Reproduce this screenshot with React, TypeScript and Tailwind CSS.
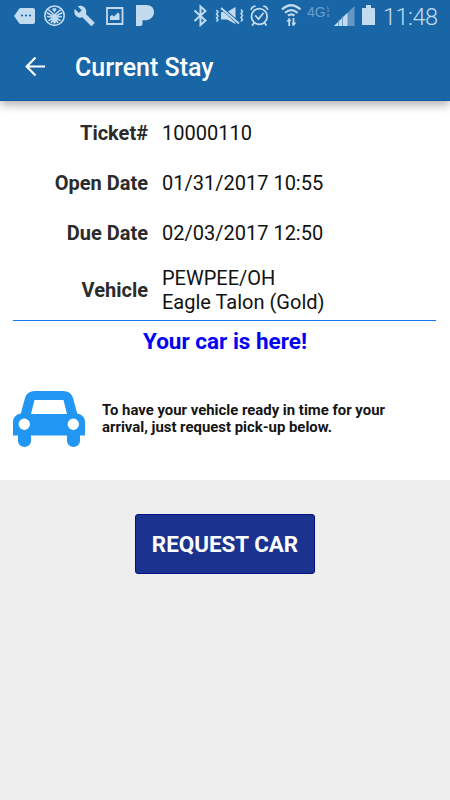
import { type ReactNode } from "react";

const details = [
  { label: "Ticket#", value: ["10000110"] },
  { label: "Open Date", value: ["01/31/2017 10:55"] },
  { label: "Due Date", value: ["02/03/2017 12:50"] },
];

// every status icon is drawn in a box as tall as the bar
function StatusIcon({
  width,
  className,
  children,
}: {
  width: number;
  className?: string;
  children: ReactNode;
}) {
  return (
    <svg
      width={width}
      height={33}
      viewBox={`0 0 ${width} 33`}
      fill="currentColor"
      className={`shrink-0 ${className ?? ""}`}
    >
      {children}
    </svg>
  );
}

function StatusBar() {
  return (
    <div className="flex h-[33px] items-center text-[#c3dbee]">
      <StatusIcon width={21} className="ml-[14px]">
        <path d="M6.5 8H19a2 2 0 0 1 2 2v12a2 2 0 0 1-2 2H6.500Q5.500 24 5 23L0 16l5-7q.5-1 1.500-1Z" />
        <g fill="#1966a7">
          <circle cx="8" cy="15.500" r="1.100" />
          <circle cx="12" cy="15.500" r="1.100" />
          <circle cx="16" cy="15.500" r="1.100" />
        </g>
      </StatusIcon>
      <StatusIcon width={22} className="ml-[9px]">
        <circle cx="10.500" cy="15.700" r="9.700" fill="none" stroke="currentColor" strokeWidth="1.600" />
        <path d="M8.500 8.200h3.500l.5 1.300-2 3-2-2.500Z" />
        <path
          d="M4.200 9.500 10.500 15l6.300-5.500M3 12.800l7.500 4.200 7.500-4.200M3 16.500l6.500.8-5 3.500M18 16.500l-6.500.8 5 3.500M10 18l-3 5M11 18l3 5"
          fill="none"
          stroke="currentColor"
          strokeWidth="1.600"
        />
        <path d="M8.500 14.500h4l-.5 4 1 3-2.500 2.500L8 21.500l1-3Z" />
      </StatusIcon>
      <StatusIcon width={22} className="ml-[8px]">
        <path
          transform="translate(-.6 4.800) scale(.92)"
          d="M22.700 19l-9.100-9.100c.9-2.300.4-5-1.500-6.900-2-2-5-2.400-7.400-1.300L9 6 6 9 1.600 4.700C.4 7.100.9 10.100 2.900 12.100c1.900 1.900 4.600 2.400 6.900 1.500l9.100 9.100c.4.400 1 .4 1.400 0l2.300-2.300c.5-.4.5-1.100.1-1.400z"
        />
      </StatusIcon>
      <StatusIcon width={18} className="ml-[10px]">
        <path d="M1 8h15.500v16H1Z" fill="none" stroke="currentColor" strokeWidth="1.800" />
        <path d="M4 20v-3.500l2-1.500 2.200 1.500 3.600-4L13.500 14v6Z" />
      </StatusIcon>
      <StatusIcon width={19} className="ml-[12px]">
        <path d="M0 5h10.500c4.800 0 7.500 3 7.500 7 0 5-3.800 8.300-9.300 8.300H6.500V24q0 2-2 2H0Z" />
      </StatusIcon>

      <StatusIcon width={15} className="ml-[38px]">
        <path
          d="m1.500 10.500 11 10L7.500 25V6.500l5 4.500-11 10"
          fill="none"
          stroke="currentColor"
          strokeWidth="2"
        />
      </StatusIcon>
      <StatusIcon width={29} className="ml-[7px]">
        <path d="M6 12h6l8.500-5v17L12 19.500H6Z" />
        <path d="m5 6.500 19 17" stroke="#1966a7" strokeWidth="3.500" />
        <g fill="none" stroke="currentColor" strokeWidth="1.500">
          <path d="m6 8 18 15.500" strokeWidth="1.800" />
          <path d="m1.500 10 1.500 2-1.500 2L3 16l-1.500 2L3 20l-1.500 1.500M26 9.500l1.500 2-1.500 2 1.500 2-1.500 2 1.500 2-1.500 2" />
        </g>
      </StatusIcon>
      <StatusIcon width={19} className="ml-[6px]">
        <g fill="none" stroke="currentColor" strokeWidth="1.800" strokeLinecap="round">
          <circle cx="9.300" cy="16.500" r="7.800" />
          <path d="m5.800 16 2.700 3 4.500-5.500M1.200 9.200q.8-2.500 3.600-3M17.600 9.200q-.8-2.500-3.600-3M4 23l-1.500 2M14.600 23l1.500 2" />
        </g>
      </StatusIcon>
      <StatusIcon width={21} className="ml-[12px]">
        <g fill="none" stroke="currentColor" strokeWidth="2.200">
          <path d="M1 9.500q9-8.500 18.500 0M4 12.800q6.200-5.500 12.500 0M7 15.700q3.200-2.700 6.500 0" />
          <path d="M8.200 26v-7.500M12.500 18v7.500" strokeWidth="1.800" />
        </g>
        <path d="M5.200 21.500 8.200 18l1.500 2v1.500ZM15.500 22.500l-3 3.500-1.500-2v-1.500Z" />
      </StatusIcon>
      <div className="ml-[5px] flex h-[33px] w-[24px] items-start pt-[6px] font-['Liberation_Sans'] text-[#6ba0cd]">
        <span className="w-[20px] text-[14px] leading-[13px]">4G</span>
        <span className="flex flex-col text-[3.500px] leading-[4px] font-bold">
          <span>L</span>
          <span>T</span>
          <span>E</span>
        </span>
      </div>
      <StatusIcon width={21} className="ml-[3px]">
        <path d="M0 26 20.500 6v20Z" fill="#6497c5" />
        <path d="M0 26 13.500 12.800V26Z" />
        <path d="M4.500 20v6M8.500 16v10" stroke="#5c93c2" strokeWidth=".8" />
      </StatusIcon>
      <StatusIcon width={13} className="ml-[7px]">
        <path d="M4 5h5v3h3.200q.8 0 .8.800V25H0V8.800Q0 8 .8 8H4Z" />
      </StatusIcon>
      <span className="ml-[8px] pt-px text-[23.500px] leading-8 font-light tracking-[-0.5px]">11:48</span>
    </div>
  );
}

function Header() {
  return (
    <header className="relative h-[101px] border-b border-[#0c5ca6] bg-[#1966a7] shadow-[0_4px_9px_rgba(0,0,0,0.3)]">
      <StatusBar />
      <div className="flex h-[67px] items-center pl-[25px] text-white">
        <svg width="21" height="20" viewBox="0 0 21 20" fill="none" stroke="currentColor" strokeWidth="2.200">
          <path d="M20 9.500H2M10.500.5 1.700 9.500l8.800 9" />
        </svg>
        <h1 className="ml-[29px] pt-[2px] text-[25px] leading-8 font-medium">Current Stay</h1>
      </div>
    </header>
  );
}

function DetailRow({ label, value }: { label: string; value: string[] }) {
  return (
    <div className="flex items-center text-[20px] leading-6">
      <div className="w-[148px] text-right font-bold text-[#2b2b2b]">{label}</div>
      <div className="ml-[14px] text-[#111111]">
        {value.map((line) => (
          <div key={line}>{line}</div>
        ))}
      </div>
    </div>
  );
}

function CarIcon() {
  return (
    <svg width="72" height="56" viewBox="0 0 72 56" className="shrink-0">
      <path
        fill="#2196f3"
        fillRule="evenodd"
        d="M22 0h28q8 0 10 7l4.200 15.500Q72 24 72 31v13.500h-5V50a6.500 6 0 0 1-13 0v-5.500H18V50a6.500 6 0 0 1-13 0v-5.500H0V31q0-7 7.800-8.500L12 7q2-7 10-7ZM21.500 9 18 23h36L50.500 9ZM11.300 27.500a5.700 5.700 0 1 0 0 11.400 5.700 5.700 0 0 0 0-11.400ZM60.300 27.500a5.700 5.700 0 1 0 0 11.400 5.700 5.700 0 0 0 0-11.400Z"
      />
    </svg>
  );
}

function App() {
  return (
    <div className="h-[800px] w-[450px] overflow-hidden bg-[#eeeeee] font-[Roboto,sans-serif]">
      <Header />
      <main className="h-[379px] bg-white px-[13px]">
        <div className="-ml-[13px] flex flex-col gap-[26px] pt-[20px]">
          {details.map((row) => (
            <DetailRow key={row.label} label={row.label} value={row.value} />
          ))}
        </div>
        <div className="mr-[1px] border-b border-[#1478ee] pt-[21px] pb-[6px]">
          <div className="-ml-[13px]">
            <DetailRow label="Vehicle" value={["PEWPEE/OH", "Eagle Talon (Gold)"]} />
          </div>
        </div>
        <p className="mt-[4px] text-center text-[22.500px] leading-8 font-bold text-[#0000f5]">
          Your car is here!
        </p>
        <div className="mt-[34px] flex items-center">
          <CarIcon />
          <p className="ml-[17px] text-[14.900px] leading-[17.500px] font-bold text-[#151515]">
            To have your vehicle ready in time for your
            <br />
            arrival, just request pick-up below.
          </p>
        </div>
      </main>
      <div className="flex justify-center pt-[34px]">
        <button className="h-[60px] w-[180px] rounded-[3px] border border-[#02108b] bg-[#1b338f] pt-[2px] text-[22.400px] font-bold text-white">
          REQUEST CAR
        </button>
      </div>
    </div>
  );
}

export default App;
